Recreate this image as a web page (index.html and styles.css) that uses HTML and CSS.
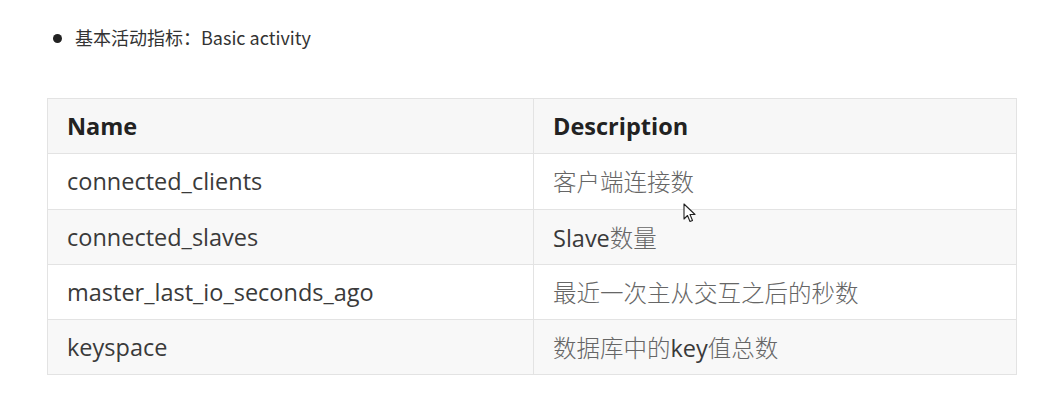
FILE: index.html
```html
<!DOCTYPE html>
<html lang="zh-CN">
<head>
<meta charset="utf-8">
<link rel="stylesheet" href="styles.css">
</head>
<body>
<div class="page">
  <ul class="bullets">
    <li>基本活动指标：Basic activity</li>
  </ul>
  <table class="metrics">
    <thead>
      <tr><th class="c-name">Name</th><th class="c-desc">Description</th></tr>
    </thead>
    <tbody>
      <tr><td>connected_clients</td><td class="zh">客户端连接数</td></tr>
      <tr><td>connected_slaves</td><td class="zh"><span class="en">Slave</span>数量</td></tr>
      <tr><td>master_last_io_seconds_ago</td><td class="zh">最近一次主从交互之后的秒数</td></tr>
      <tr><td>keyspace</td><td class="zh">数据库中的<span class="en">key</span>值总数</td></tr>
    </tbody>
  </table>
  <svg class="cursor" width="14" height="20" viewBox="0 0 14 20"><path d="M1 1 L1 16 L4.5 12.5 L7 18.5 L9.5 17.5 L7 11.5 L12 11.5 Z" fill="#fff" stroke="#222" stroke-width="1.1" stroke-linejoin="round"/></svg>
</div>
</body>
</html>
```
FILE: styles.css
```css
html, body { margin: 0; padding: 0; background: #fff; }
.page {
  position: relative;
  padding: 22px 28px 0 47px;
  font-family: "Open Sans", "Noto Sans CJK SC", sans-serif;
  color: #333;
}
.bullets {
  margin: 0 0 46px 0;
  padding: 0 0 0 28px;
  font-family: "Noto Sans CJK SC", "Open Sans", sans-serif;
  font-size: 18px;
  line-height: 30px;
  color: #333;
  list-style: none;
}
.bullets li { position: relative; }
.bullets li::before {
  content: "";
  position: absolute;
  left: -22px;
  top: 12px;
  width: 9px;
  height: 9px;
  border-radius: 50%;
  background: #222;
}
.metrics {
  width: 970px;
  border-collapse: collapse;
  font-size: 23.5px;
}
.metrics th, .metrics td {
  border: 1px solid #e3e3e3;
  text-align: left;
  padding: 0 19px;
  height: 55.3px;
  box-sizing: border-box;
}
.metrics th { font-weight: 700; color: #222; background: #f7f7f7; }
.c-name { width: 486px; }
.metrics td { color: #3a3a3a; }
.metrics tbody tr:nth-child(even) td { background: #f8f8f8; }
.zh { font-family: "Noto Sans CJK SC", sans-serif; color: #666 !important; font-weight: 300; }
.zh .en { font-family: "Open Sans", sans-serif; color: #3a3a3a; font-weight: 400; }
.cursor { position: absolute; left: 683px; top: 203px; }
```
